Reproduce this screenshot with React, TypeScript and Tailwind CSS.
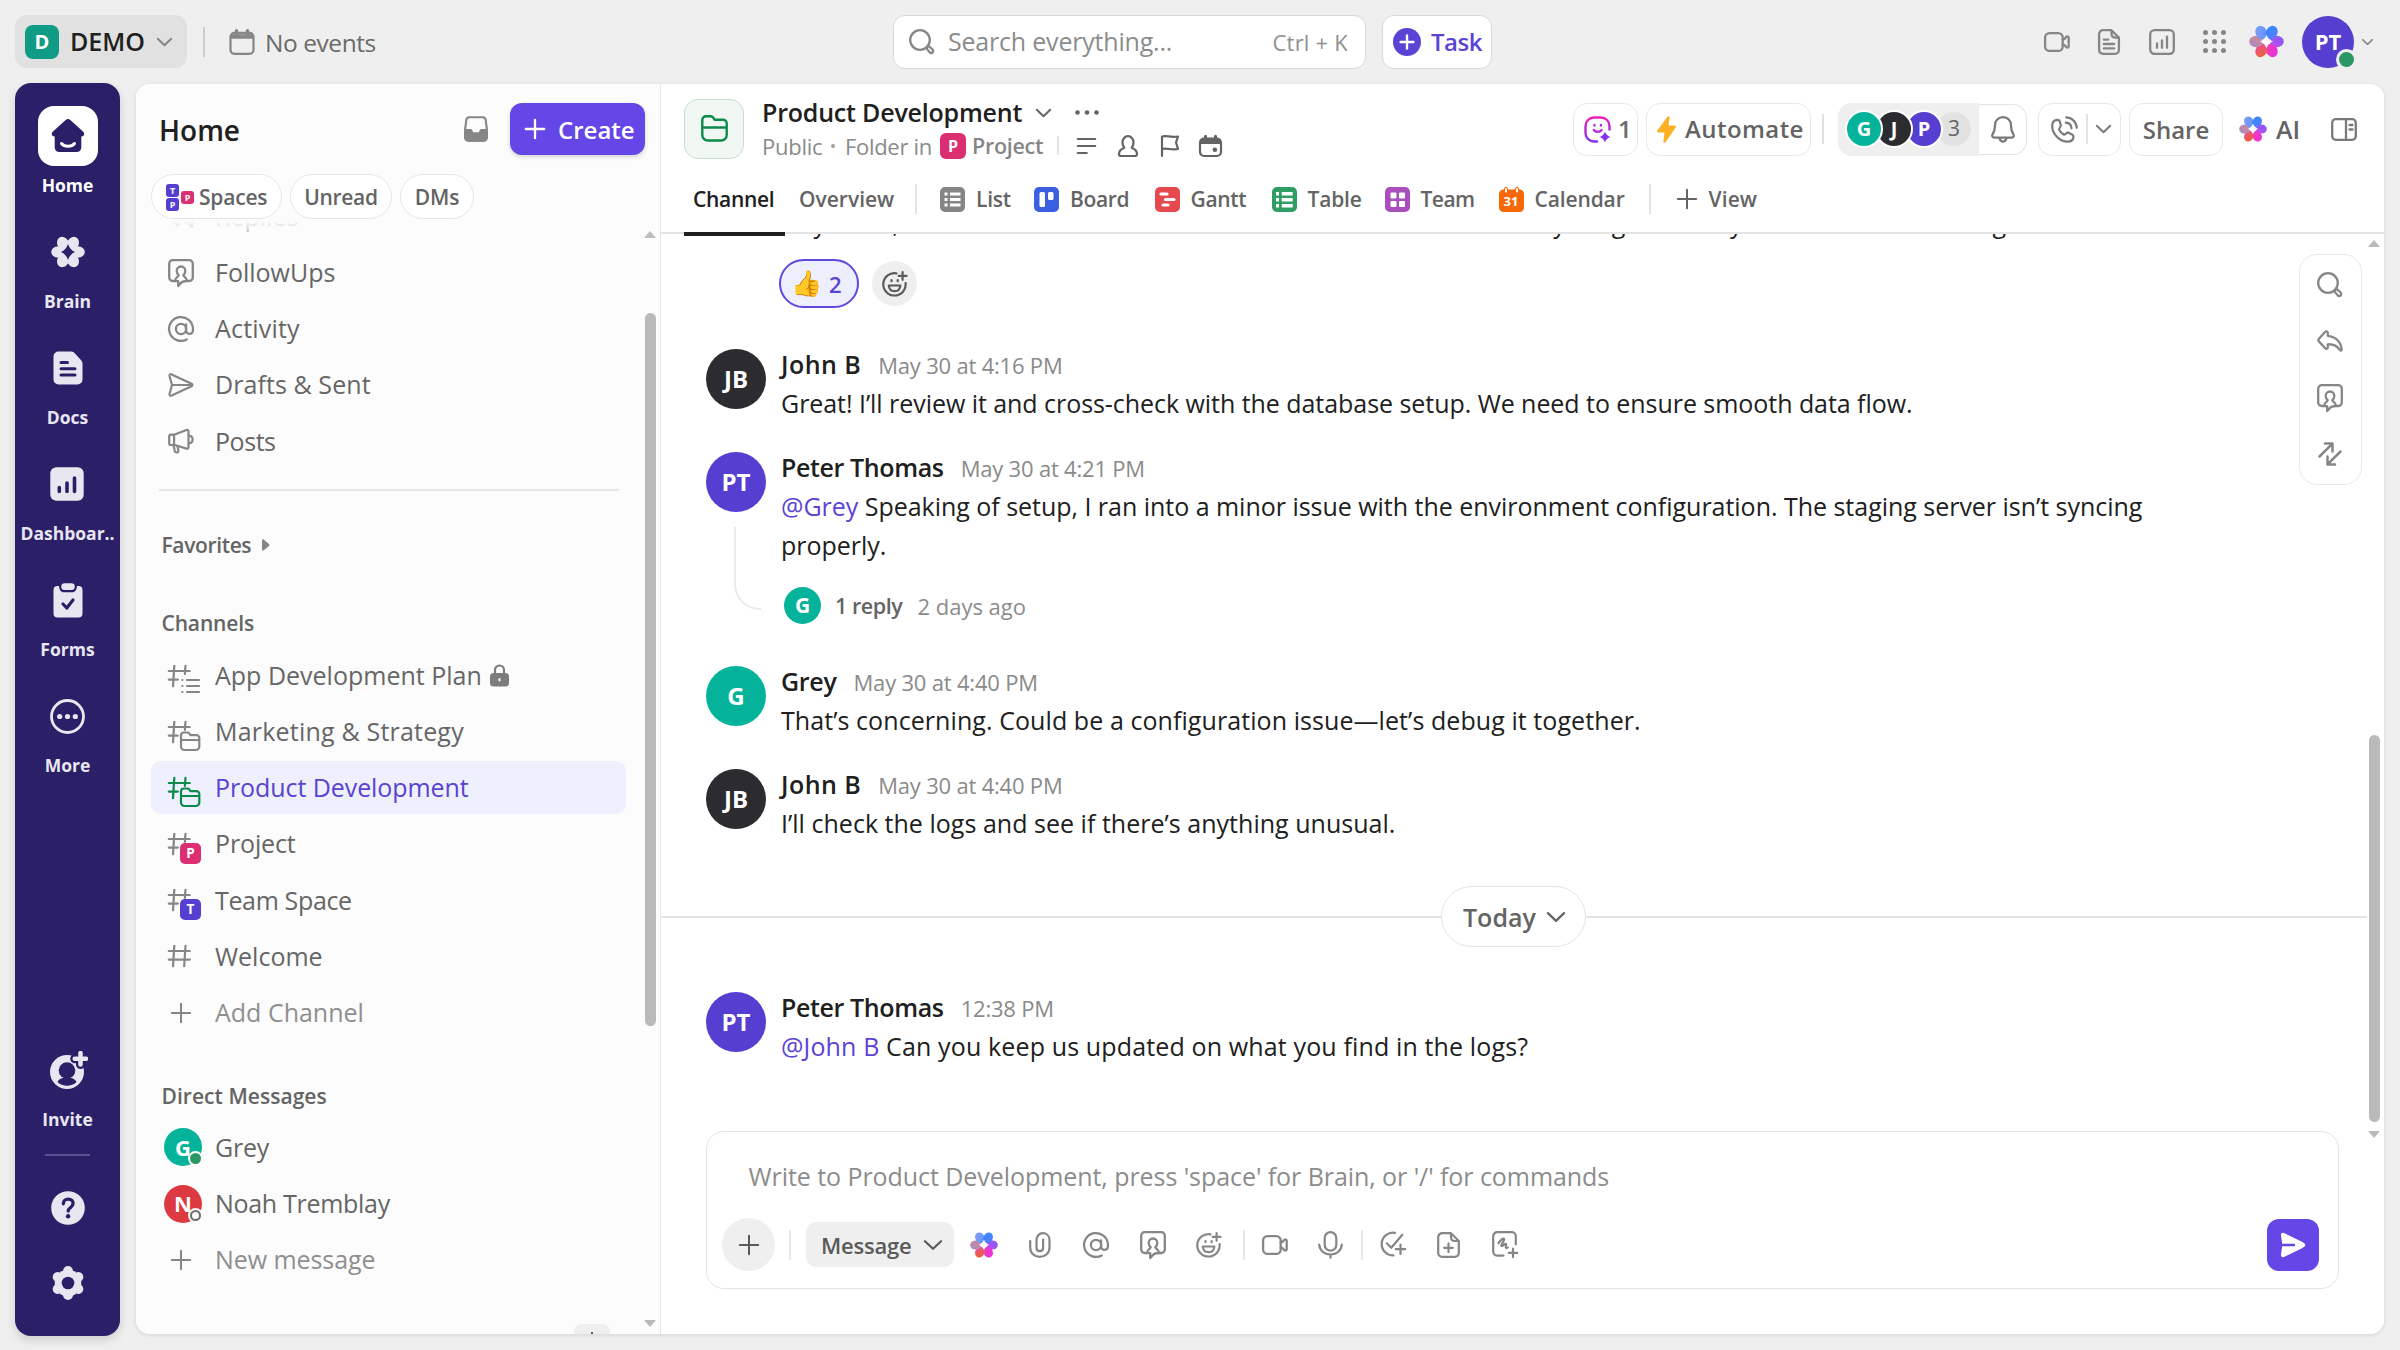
import type { ReactNode } from "react";

/* ---------- icon helpers ---------- */

type IconProps = { w?: number; h?: number; vb?: string; sw?: number; className?: string; children?: ReactNode };

function Ico({ w = 26, h = 26, vb, sw = 2.1, className = "", children }: IconProps) {
  return (
    <svg
      width={w}
      height={h}
      viewBox={vb ?? `0 0 ${w} ${h}`}
      fill="none"
      stroke="currentColor"
      strokeWidth={sw}
      strokeLinecap="round"
      strokeLinejoin="round"
      className={`shrink-0 overflow-visible ${className}`}
    >
      {children}
    </svg>
  );
}

const Chevron = ({ w = 15, h = 8, sw = 2, className = "" }: IconProps) => (
  <Ico w={w} h={h} vb="0 0 15 8" sw={sw} className={className}>
    <path d="M.8.8 7.5 7.2 14.2.8" />
  </Ico>
);

const Plus = ({ w = 20, sw = 2, className = "" }: IconProps) => (
  <Ico w={w} h={w} vb="0 0 20 20" sw={sw} className={className}>
    <path d="M10 .8v18.4M.8 10h18.4" />
  </Ico>
);

const SearchIcon = () => (
  <Ico sw={2.3}>
    <circle cx="11" cy="11" r="9.8" />
    <path d="m18 18.400 1.600-1.500 4 3.600a2 2 0 0 1-2.900 2.900l-3-3.800z" />
  </Ico>
);

const EventCalendar = () => (
  <Ico w={26} h={26} sw={2.2}>
    <rect x="1.5" y="3.8" width="23" height="21" rx="4" />
    <path d="M2 7.5h22" strokeWidth="4.5" strokeLinecap="butt" />
    <path d="M7.5 1.6v3.2M18.5 1.6v3.2" strokeWidth="3.4" />
  </Ico>
);

const VideoIcon = () => (
  <Ico w={26} h={20} sw={2.300}>
    <rect x="1.1" y="1.1" width="17.6" height="17.8" rx="4.5" />
    <path d="m18.7 7.6 2-.8 1.7-2c.8-.7 2.300-.4 2.300.9v8.600c0 1.300-1.500 1.600-2.300.9l-1.700-2-2-.8" />
  </Ico>
);

const DocIcon = () => (
  <Ico w={22} h={26} sw={2.300}>
    <path d="M13.5 1.200H5a3.900 3.900 0 0 0-3.900 3.900v15.800A3.900 3.900 0 0 0 5 24.800h12a3.900 3.900 0 0 0 3.900-3.900V8.600zM13.500 1.500v3.600a3.500 3.500 0 0 0 3.500 3.500h3.600" />
    <path d="M5.800 10.600h4.500M5.800 15h10.400M5.800 19.400h10.400" />
  </Ico>
);

const ChartIcon = () => (
  <Ico sw={2.300}>
    <rect x="1.200" y="1.200" width="23.600" height="23.600" rx="4.200" />
    <path d="M8 14.500v4.300M13 11.300v7.500M18 7.600v11.200" />
  </Ico>
);

const GridDots = () => (
  <Ico w={23} h={23} sw={0}>
    {[2.5, 11.5, 20.5].map((y) => [2.5, 11.5, 20.5].map((x) => <circle key={`${x}-${y}`} cx={x} cy={y} r="2.5" fill="currentColor" />))}
  </Ico>
);

const FollowUpIcon = () => (
  <Ico w={26} h={28} sw={2.300}>
    <path d="M6.500 22H4.600a3.400 3.400 0 0 1-3.400-3.400V4.600a3.400 3.400 0 0 1 3.400-3.400h16.800a3.400 3.400 0 0 1 3.400 3.400v14a3.400 3.400 0 0 1-3.400 3.400h-1.900" />
    <path d="M10.700 16.200c-1.300-1-2-2.600-2-4.400a4.300 4.300 0 0 1 8.600 0c0 1.800-.7 3.400-2 4.400.2 1.800 3.600 1.900 3.700 5.800-3.300 0-5.400.9-6.600 2.600l-2.200 2.400v-4.800H7c.1-4 3.500-4.200 3.700-6z" />
  </Ico>
);

const AtIcon = () => (
  <Ico vb="1 1 22 22" sw={1.900}>
    <circle cx="12" cy="12" r="4.300" />
    <path d="M16.300 8v5.200a2.900 2.900 0 0 0 5.800 0V12a10.100 10.100 0 1 0-5.200 8.800" />
  </Ico>
);

const SentIcon = () => (
  <Ico w={26} h={24} sw={2.200}>
    <path d="M1.500 3C1.200 1.400 2.400.9 3.600 1.400l20 9.400c1.100.6 1.100 1.800 0 2.400l-20 9.400c-1.200.5-2.400 0-2.100-1.600L4 12zM4 12h20" />
  </Ico>
);

const PostsIcon = () => (
  <Ico w={26} h={26} sw={2.200}>
    <path d="M6 6.800 18.500 2c1.200-.4 2 .2 2 1.300v16c0 1.100-.8 1.700-2 1.300L6 16.800" />
    <rect x="1.200" y="6.600" width="4.900" height="10.400" rx="1.800" />
    <path d="M20.800 7.700c2 .2 3.800 1.700 3.800 3.900s-1.800 3.700-3.800 3.900M5.500 17.300l1.300 5.800c.6 1.900 4 1.700 3.600-.4l-.9-4.600" />
  </Ico>
);

const ReplyIcon = () => (
  <Ico w={26} h={22} sw={2.300}>
    <path d="M10.800 5.800V3c0-1.500-1.500-2.200-2.600-1.200L1.800 8.900c-.7.800-.7 1.600 0 2.400l6.400 7c1.100 1.100 2.600.4 2.600-1.100v-2.900c5.700-.4 9.200 1.500 12.300 5.700.6.8 1.700.5 1.600-.6-.7-7.400-6.200-13-13.900-13.600z" />
  </Ico>
);

const SwapIcon = () => (
  <Ico w={24} h={24} sw={2.500}>
    <path d="M1.500 14.500 14.200 1.800M7 1.500h7.500v8M22.500 9.500 9.800 22.200M9.500 14.500v8H17" />
  </Ico>
);

const EmojiPlus = () => (
  <Ico sw={2.200}>
    <path d="M14.500 2.300A11.200 11.200 0 1 0 23.600 12" />
    <path d="M20.600 1v7.800M16.700 4.900h7.800" />
    <path d="M6.800 14.500h11.600c-.3 3.500-2.600 5.700-5.800 5.700s-5.500-2.200-5.800-5.700zM9.500 9v1.200M15.700 9v1.200" />
  </Ico>
);

const ClipIcon = () => (
  <Ico w={22} h={26} sw={2.200}>
    <path d="M1.200 9v6.500C1.200 21 5.300 24.900 10.800 24.900s9.700-3.900 9.700-9.400V8.200c0-4-2.700-7-6.600-7s-6.400 3-6.400 7v7.600c0 2 1.300 3.400 3.300 3.400s3.300-1.400 3.300-3.400V7.500" />
  </Ico>
);

const MicIcon = () => (
  <Ico w={25} h={28} sw={2.200}>
    <rect x="6.700" y="1.200" width="11.600" height="18.500" rx="5.800" />
    <path d="M1.200 13.500c.4 6 5 10 11.300 10s10.900-4 11.300-10M12.500 23.500v3.200" />
  </Ico>
);

const TaskPlus = () => (
  <Ico w={27} h={27} sw={2.200}>
    <path d="M16 1.900A11.300 11.300 0 1 0 14.500 24.300M7.800 12.300l4.500 4.500L23.300 3.800" />
    <path d="M21.500 13.500v9.400M16.800 18.200h9.400" />
  </Ico>
);

const DocPlus = () => (
  <Ico w={23} h={26} sw={2.200}>
    <path d="M14 1.200H5.200a4 4 0 0 0-4 4v15.600a4 4 0 0 0 4 4h12.600a4 4 0 0 0 4-4V9zM14 1.500v4A3.500 3.500 0 0 0 17.500 9h4M11.500 11.500v8.600M7.200 15.800h8.600" />
  </Ico>
);

const BoardPlus = () => (
  <Ico w={26} h={27} sw={2.200}>
    <path d="M11.500 24.600H5.200a4 4 0 0 1-4-4V5.200a4 4 0 0 1 4-4h14.600a4 4 0 0 1 4 4v8.300" />
    <path d="M6.500 12.300c1.500-3 4.800-5.600 5.600-4.400.9 1.500-3.600 5.800-2.700 7 .9 1 3.400-2.800 4.600-1.900.9.800-.9 2.700 0 3.700.5.500 1.200.3 1.800-.2M21 17.500v8.600M16.700 21.800h8.600" />
  </Ico>
);

const BellIcon = () => (
  <Ico w={24} h={27} sw={2.300}>
    <path d="M12 1.200c-4.800 0-8 3.600-8 8.200 0 5-1 6.600-2.300 8.600-1.200 1.900-.3 3.700 1.800 3.700h17c2.100 0 3-1.800 1.800-3.700C21 16 20 14.400 20 9.400c0-4.600-3.200-8.200-8-8.200zM8.500 22c.5 2.200 1.800 3.600 3.500 3.600s3-1.400 3.500-3.600" />
  </Ico>
);

const PhoneIcon = () => (
  <Ico w={27} h={27} sw={2.200}>
    <path d="M8.300 4.300 5.800 3.800C3 4.300 1.200 6.700 1.200 9.800c0 8.200 7.300 15.900 15.500 15.900 3 0 5.300-1.600 5.800-4.400.2-1.400-.4-2.300-1.400-2.800l-3-1.500c-1.300-.6-2.300-.2-3.200.8-.7.800-1.600 1-2.600.4-1.700-1-3-2.300-3.900-3.900-.5-1-.3-1.900.4-2.600 1-.9 1.400-1.900.9-3.200l-1.400-4.200z" />
    <path d="M15.200 1.300C21 1.500 25.500 6 25.700 11.800M14.800 6.700c3.300.2 5.500 2.400 5.700 5.600" />
  </Ico>
);

const PanelIcon = () => (
  <Ico w={26} h={23} sw={2.300}>
    <rect x="1.200" y="1.200" width="23.600" height="20.600" rx="3.500" />
    <path d="M15 1.500v20M18.500 7h3M18.500 11.500h3" />
  </Ico>
);

const FolderIcon = ({ w = 27, h = 27, sw = 2.4 }: IconProps) => (
  <Ico w={w} h={h} vb="0 0 27 27" sw={sw}>
    <path d="M1.300 12.500V5a3.700 3.700 0 0 1 3.700-3.700h4.700c1 0 1.800.4 2.400 1.200l1.600 2.300H22a3.700 3.700 0 0 1 3.700 3.700v4M1.300 12.500h24.400M1.300 12.500V20a5.500 5.500 0 0 0 5.500 5.500h13.400a5.500 5.500 0 0 0 5.500-5.500v-7.500" />
  </Ico>
);

function BrainFlower({ size = 34 }: { size?: number }) {
  const petals = [
    { a: 0, from: "#c24bf0", to: "#7d5cf8" },
    { a: 60, from: "#ef3fae", to: "#e92de6" },
    { a: 120, from: "#f0489a", to: "#e8672c" },
    { a: 180, from: "#d58a8a", to: "#a58ac8" },
    { a: 240, from: "#5f8dff", to: "#7fa4f5" },
    { a: 300, from: "#5a7bff", to: "#2f8bff" },
  ];
  return (
    <svg width={size} height={size} viewBox="-17 -17 34 34" className="shrink-0">
      <defs>
        {petals.map((p) => (
          <linearGradient key={p.a} id={`petal-${p.a}`} x1="0" x2="1" y1="1" y2="0">
            <stop offset="0" stopColor={p.from} />
            <stop offset="1" stopColor={p.to} />
          </linearGradient>
        ))}
      </defs>
      {petals.map((p) => (
        <ellipse key={p.a} cx="10" cy="0" rx="6.800" ry="5.500" transform={`rotate(${p.a})`} fill={`url(#petal-${p.a})`} />
      ))}
      <path d="M0-6.500Q1.700-1.700 6.300 0 1.700 1.700 0 6.500-1.700 1.700-6.300 0-1.700-1.700 0-6.500Z" fill="#fff" fillOpacity=".92" />
    </svg>
  );
}

/* ---------- top bar ---------- */

function TopBar() {
  return (
    <header className="flex h-[83px] shrink-0 items-center pl-[15px] text-[#868686]">
      <div className="flex w-[878px] items-center">
        <div className="flex h-[53px] w-[172px] items-center rounded-[12px] bg-[#e1e1e1] pl-[10px]">
          <span className="flex size-[34px] items-center justify-center rounded-[8px] bg-[#0f9b86] text-[20px] font-bold text-white">D</span>
          <span className="ml-[11px] w-[87px] pt-px text-[25px] font-semibold text-[#202020]">DEMO</span>
          <Chevron />
        </div>
        <div className="ml-[16px] h-[30px] w-[2px] bg-[#cbcbcb]" />
        <div className="ml-[24px] flex items-center gap-[10px]">
          <EventCalendar />
          <span className="pt-[3px] text-[24.500px] tracking-[-0.018em] text-[#6b6b6b]">No events</span>
        </div>
      </div>
      <div className="flex h-[54px] w-[473px] items-center rounded-[12px] border border-[#d9d9d9] bg-white pl-[15px] pr-[17px]">
        <SearchIcon />
        <span className="ml-[13px] pt-px text-[25px] tracking-[-0.008em] text-[#8c8c8c]">Search everything...</span>
        <span className="ml-auto pt-px text-[22px] tracking-[0.01em] text-[#8f8f8f]">Ctrl + K</span>
      </div>
      <div className="ml-[16px] flex h-[54px] w-[110px] items-center rounded-[12px] border border-[#d9d9d9] bg-white pl-[10px] text-[#5b43d6]">
        <span className="flex size-[28px] items-center justify-center rounded-full bg-[#5b43d6] text-white">
          <Plus w={14} sw={3.400} />
        </span>
        <span className="ml-[10px] pt-px text-[24px] font-semibold tracking-[-0.021em]">Task</span>
      </div>
      <div className="ml-auto flex items-center pr-[27px]">
        <VideoIcon />
        <span className="ml-[28px] flex"><DocIcon /></span>
        <span className="ml-[29px] flex"><ChartIcon /></span>
        <span className="ml-[28px] flex"><GridDots /></span>
        <span className="ml-[23px] flex"><BrainFlower size={35} /></span>
        <span className="relative ml-[18px] flex size-[52px] items-center justify-center rounded-full bg-[#563ed0] text-[22px] font-bold text-white">
          PT
          <span className="absolute -bottom-[2px] -right-[3px] size-[21px] rounded-full border-[3px] border-[#efefef] bg-[#2a9764]" />
        </span>
        <Chevron w={11} h={6} className="ml-[8px]" />
      </div>
    </header>
  );
}

/* ---------- left rail ---------- */

const railHome = (
  <svg width="34" height="34" viewBox="0 0 34 34" fill="#2b2068">
    <path d="M14.400 1.200a4 4 0 0 1 5.200 0L32 12.500c2.300 2.200 1.200 5.100-1.700 5.100v11a4.500 4.500 0 0 1-4.500 4.500H8.200a4.500 4.500 0 0 1-4.500-4.500v-11C.8 17.600-.3 14.700 2 12.500z" />
    <path d="M10.500 24.500c3 3.700 10 3.700 13 0" fill="none" stroke="#fff" strokeWidth="3" strokeLinecap="round" />
  </svg>
);
const railBrain = (
  <svg width="34" height="34" viewBox="-17 -17 34 34" fill="#e8e6f0">
    {[0, 60, 120, 180, 240, 300].map((a) => (
      <ellipse key={a} cx="10" cy="0" rx="6.800" ry="5.700" transform={`rotate(${a})`} />
    ))}
    <path d="M0-8Q2-2 7 0 2 2 0 8-2 2-7 0-2-2 0-8Z" fill="#2b2068" />
  </svg>
);
const railDocs = (
  <svg width="30" height="34" viewBox="0 0 30 34" fill="#e8e6f0">
    <path d="M5.500.5h12c2 0 3.200.6 4.500 2l5.700 6.300c1.200 1.300 1.800 2.400 1.800 4.200v15.500a5 5 0 0 1-5 5h-19a5 5 0 0 1-5-5v-23a5 5 0 0 1 5-5z" />
    <path d="M8 11.500h6.500M8 17.800h14M8 24h14" stroke="#2b2068" strokeWidth="3" strokeLinecap="round" />
  </svg>
);
const railDash = (
  <svg width="34" height="34" viewBox="0 0 34 34" fill="#e8e6f0">
    <rect x=".3" y=".3" width="33.400" height="33.400" rx="6" />
    <path d="M9.300 20.500v4M17 16v8.500M24.500 11v13.500" stroke="#2b2068" strokeWidth="3.600" strokeLinecap="round" />
  </svg>
);
const railForms = (
  <svg width="30" height="35" viewBox="0 0 30 35" fill="#e8e6f0">
    <path d="M4.500 3H6c.3 4 2 6.300 5 6.300h8c3 0 4.700-2.300 5-6.300h1.500a4 4 0 0 1 4 4v23.500a4 4 0 0 1-4 4h-21a4 4 0 0 1-4-4V7a4 4 0 0 1 4-4z" />
    <rect x="8.300" y=".3" width="13.400" height="6.700" rx="3.300" />
    <path d="m10 21 3.800 4 6.200-8" fill="none" stroke="#2b2068" strokeWidth="3.200" strokeLinecap="round" strokeLinejoin="round" />
  </svg>
);
const railMore = (
  <svg width="35" height="35" viewBox="0 0 35 35" fill="#e8e6f0">
    <circle cx="17.500" cy="17.500" r="16" fill="none" stroke="#e8e6f0" strokeWidth="2.800" />
    {[9.700, 17.500, 25.300].map((x) => <circle key={x} cx={x} cy="17.500" r="2.600" />)}
  </svg>
);
const railInvite = (
  <svg width="38" height="38" viewBox="0 0 38 38" fill="#e8e6f0" className="ml-[3px]">
    <circle cx="17" cy="21" r="17" />
    <circle cx="17" cy="19.500" r="8.300" fill="#2b2068" />
    <path d="M7.500 31c1.200-3 4-3.500 6.500-4.500h6c2.500 1 5.300 1.500 6.500 4.500-5 5-14 5-19 0z" fill="#2b2068" />
    <path d="M30.500 2v11.500M24.700 7.800h11.500" stroke="#2b2068" strokeWidth="9" strokeLinecap="round" />
    <path d="M30.500 2v11.500M24.700 7.800h11.500" stroke="#e8e6f0" strokeWidth="4.500" strokeLinecap="round" />
  </svg>
);

function RailItem({ icon, label, active }: { icon: ReactNode; label: string; active?: boolean }) {
  return (
    <div className="flex h-[116.200px] flex-col items-center">
      <div className={`flex size-[60px] items-center justify-center rounded-[16px] ${active ? "bg-white" : ""}`}>{icon}</div>
      <span className={`mt-[6px] whitespace-nowrap text-[17.500px] font-bold leading-[26px] ${active ? "text-white" : "text-[#e8e6f0]"}`}>{label}</span>
    </div>
  );
}

function Rail() {
  return (
    <nav className="ml-[15px] flex h-[1253px] w-[105px] shrink-0 flex-col items-center rounded-[16px] bg-[#2b2068] pt-[22.500px] shadow-[0_4px_10px_rgba(0,0,0,0.14)]">
      <RailItem icon={railHome} label="Home" active />
      <RailItem icon={railBrain} label="Brain" />
      <RailItem icon={railDocs} label="Docs" />
      <RailItem icon={railDash} label="Dashboar.." />
      <RailItem icon={railForms} label="Forms" />
      <RailItem icon={railMore} label="More" />
      <div className="mt-auto flex flex-col items-center">
        <RailItem icon={railInvite} label="Invite" />
        <div className="-mt-[2px] h-[2px] w-[45px] bg-[#5b5091]" />
        <svg width="34" height="34" viewBox="0 0 34 34" className="mt-[35px]">
          <circle cx="17" cy="17" r="16.800" fill="#e8e6f0" />
          <path d="M12.300 12.800c0-2.800 2-4.700 4.900-4.700s4.900 1.800 4.900 4.500c0 3.800-4.900 3.900-4.900 7.400" fill="none" stroke="#2b2068" strokeWidth="3.300" strokeLinecap="round" />
          <circle cx="17.100" cy="25.200" r="2.200" fill="#2b2068" />
        </svg>
        <svg width="34" height="34" viewBox="-17 -17 34 34" className="mb-[36px] mt-[41px]" fill="#e8e6f0">
          <circle r="13.300" />
          {[30, 90, 150, 210, 270, 330].map((a) => <circle key={a} cx="12" cy="0" r="4.900" transform={`rotate(${a})`} />)}
          <circle r="6.300" fill="#2b2068" />
        </svg>
      </div>
    </nav>
  );
}

/* ---------- sidebar ---------- */

type Sub = "none" | "list" | "folder" | "badge";

function HashIcon({ sub = "none", badge, badgeColor }: { sub?: Sub; badge?: string; badgeColor?: string }) {
  return (
    <span className="relative block h-[22px] w-[32px]">
      <Ico w={32} h={30} sw={2.200} className="absolute left-0 top-0">
        {sub === "none" ? (
          <path d="M6.300.8 5 21.200M17.500.8l-1.300 20.400M.8 6h21M.8 14.600h21" />
        ) : (
          <path d="M6.300.8 5 21.200M17.500.8l-.6 8.200M.8 6h21M.8 14.600h9" />
        )}
        {sub === "list" && <path d="M14.300 15h.1M14.300 21h.1M14.300 27h.1M19 15h12M19 21h12M19 27h12" />}
        {sub === "folder" && (
          <path d="M13 19v-4.500a3 3 0 0 1 3-3h3.500c.8 0 1.300.3 1.700.9l1.300 1.800h6a2.800 2.800 0 0 1 2.800 2.800v2M13 19h18.300M13 19v6.500a3.500 3.500 0 0 0 3.500 3.500h11.300a3.500 3.500 0 0 0 3.500-3.500V19" />
        )}
      </Ico>
      {sub === "badge" && (
        <span className={`absolute left-[12px] top-[10px] flex size-[21px] items-center justify-center rounded-[5px] text-[13.500px] font-bold leading-none text-white ${badgeColor}`}>
          {badge}
        </span>
      )}
    </span>
  );
}

function Row({ icon, children, active, muted }: { icon: ReactNode; children: ReactNode; active?: boolean; muted?: boolean }) {
  const tone = active ? "text-[#5a43d0]" : muted ? "text-[#8f8f8f]" : "text-[#666666]";
  return (
    <div className="flex h-[56.200px] items-center">
      <div className={`flex h-[53px] w-[475px] items-center rounded-[10px] pl-[17px] ${active ? "bg-[#eef0fe]" : ""}`}>
        <span className={`flex w-[47px] items-center ${active ? "text-[#0b8a4a]" : "text-[#868686]"}`}>{icon}</span>
        <span className={`flex items-center whitespace-nowrap text-[25px] ${tone}`}>{children}</span>
      </div>
    </div>
  );
}

function Pill({ children, className = "" }: { children: ReactNode; className?: string }) {
  return (
    <div className={`flex h-[45px] items-center rounded-full border border-[#e6e6e6] bg-white pt-[2px] text-[21px] font-semibold tracking-[-0.01em] text-[#646464] ${className}`}>
      {children}
    </div>
  );
}

function MiniSpace({ t, c }: { t: string; c: string }) {
  return <span className={`flex size-[13px] items-center justify-center overflow-hidden rounded-[3px] text-[9px] font-bold leading-none text-white ${c}`}>{t}</span>;
}

function Sidebar() {
  return (
    <aside className="relative flex w-[524px] shrink-0 flex-col bg-[#fcfcfc] pl-[15px]">
      <div className="mt-[19px] flex h-[52px] items-center">
        <h1 className="ml-[8px] pt-[2px] text-[28px] font-semibold text-[#202020]">Home</h1>
        <svg width="24" height="26" viewBox="0 0 24 26" className="ml-auto" fill="none" stroke="#868686" strokeWidth="2.100" strokeLinejoin="round">
          <path d="M5.500 1.200h13c1.800 0 2.900.9 3.200 2.600l1.200 9.700v7.800a3.500 3.500 0 0 1-3.500 3.500H4.600a3.500 3.500 0 0 1-3.500-3.500v-7.800l1.200-9.700c.3-1.700 1.400-2.600 3.200-2.600z" />
          <path d="M1.100 14H7l1.500 3.400h7L17 14h5.900v7.300a3.500 3.500 0 0 1-3.500 3.500H4.600a3.500 3.500 0 0 1-3.500-3.500z" fill="#868686" />
        </svg>
        <button className="ml-[22px] mr-[15px] flex h-[52px] w-[135px] items-center rounded-[12px] bg-[#6447e6] pl-[15px] text-white shadow-[0_2px_4px_rgba(0,0,0,0.16)]">
          <Plus sw={2.300} />
          <span className="ml-[13px] pt-[2px] text-[24px] font-semibold">Create</span>
        </button>
      </div>
      <div className="mt-[19px] flex gap-[8px]">
        <Pill className="w-[131px] pl-[14px]">
          <span className="mr-[5px] flex items-center gap-[2px]">
            <span className="flex flex-col gap-[1.500px]">
              <MiniSpace t="T" c="bg-[#563ed0]" />
              <MiniSpace t="P" c="bg-[#563ed0]" />
            </span>
            <MiniSpace t="P" c="bg-[#dc2f72]" />
          </span>
          Spaces
        </Pill>
        <Pill className="w-[102px] justify-center"><span className="tracking-[-0.015em]">Unread</span></Pill>
        <Pill className="w-[74px] justify-center">DMs</Pill>
      </div>

      <div className="relative mt-[2px] h-[1113px] overflow-hidden">
        <div className="-mt-[32.500px]">
          <Row icon={<ReplyIcon />}>Replies</Row>
          <Row icon={<FollowUpIcon />}>FollowUps</Row>
          <Row icon={<AtIcon />}><span className="tracking-[0.008em]">Activity</span></Row>
          <Row icon={<SentIcon />}><span className="tracking-[0.003em]">Drafts &amp; Sent</span></Row>
          <Row icon={<PostsIcon />}><span className="tracking-[-0.018em]">Posts</span></Row>
        </div>
        <div className="ml-[8px] mt-[20px] h-[2px] w-[460px] bg-[#e6e6e6]" />
        <div className="ml-[10.500px] mt-[39px] flex h-[30px] items-center text-[21px] font-semibold tracking-[-0.017em] text-[#646464]">
          Favorites
          <svg width="8" height="12" viewBox="0 0 8 12" className="ml-[11px]" fill="#868686"><path d="M0 1.500C0 .3 1 0 1.800.8L7 5c.6.600.6 1.400 0 2l-5.200 4.200C1 12 0 11.700 0 10.500z" /></svg>
        </div>
        <div className="ml-[10.500px] mt-[48px] h-[30px] text-[21px] font-semibold leading-[30px] tracking-[-0.007em] text-[#646464]">Channels</div>
        <div className="mt-[9px]">
          <Row icon={<HashIcon sub="list" />}>
            App Development Plan
            <svg width="19" height="23" viewBox="0 0 19 23" className="ml-[8px]" fill="#7c7c7c">
              <path d="M5 11V6a4.500 4.500 0 0 1 9 0v5" fill="none" stroke="#7c7c7c" strokeWidth="2.200" />
              <rect y="9" width="19" height="13.500" rx="3.500" />
              <rect x="8.500" y="14" width="2" height="3.500" rx="1" fill="#fcfcfc" />
            </svg>
          </Row>
          <Row icon={<HashIcon sub="folder" />}><span className="tracking-[0.008em]">Marketing &amp; Strategy</span></Row>
          <Row active icon={<HashIcon sub="folder" />}><span className="tracking-[-0.003em]">Product Development</span></Row>
          <Row icon={<HashIcon sub="badge" badge="P" badgeColor="bg-[#dc2f72]" />}><span className="tracking-[-0.005em]">Project</span></Row>
          <Row icon={<HashIcon sub="badge" badge="T" badgeColor="bg-[#563ed0]" />}><span className="tracking-[-0.014em]">Team Space</span></Row>
          <Row icon={<HashIcon />}>Welcome</Row>
          <Row muted icon={<Plus className="ml-[3px]" />}>Add Channel</Row>
        </div>
        <div className="ml-[10.500px] mt-[40px] h-[30px] text-[21px] font-semibold leading-[30px] tracking-[0.002em] text-[#646464]">Direct Messages</div>
        <div className="mt-[8.500px]">
          <Row
            icon={
              <span className="relative -ml-[4px] flex size-[38px] items-center justify-center rounded-full bg-[#05b39a] text-[22px] font-bold text-white">
                G
                <span className="absolute -right-[1px] bottom-0 size-[15px] rounded-full border-2 border-[#fcfcfc] bg-[#2a9764]" />
              </span>
            }
          >
            <span className="tracking-[-0.01em]">Grey</span>
          </Row>
          <Row
            icon={
              <span className="relative -ml-[4px] flex size-[38px] items-center justify-center rounded-full bg-[#dc3a40] text-[22px] font-bold text-white">
                N
                <span className="absolute -right-[1px] bottom-0 flex size-[15px] items-center justify-center rounded-full bg-[#fcfcfc]">
                  <span className="size-[11px] rounded-full border-2 border-[#6b6b6b]" />
                </span>
              </span>
            }
          >
            <span className="tracking-[-0.012em]">Noah Tremblay</span>
          </Row>
          <Row muted icon={<Plus className="ml-[3px]" />}><span className="tracking-[-0.003em]">New message</span></Row>
        </div>
        <div className="absolute inset-x-0 top-0 h-[18px] bg-gradient-to-b from-[#fcfcfc] via-[#fcfcfc]/70 to-[#fcfcfc]/10" />
        <div className="absolute bottom-0 left-[423px] flex h-[10px] w-[36px] justify-center overflow-hidden rounded-t-[8px] bg-[#efefef]">
          <span className="mt-[8px] h-[4px] w-[2px] bg-[#5a5a5a]" />
        </div>
      </div>

      <span className="absolute left-[508px] top-[147px] border-x-[6.500px] border-b-[7px] border-x-transparent border-b-[#bdbdbd]" />
      <span className="absolute left-[509px] top-[229px] h-[713px] w-[11px] rounded-full bg-[#bababa]" />
      <span className="absolute left-[508px] top-[1236px] border-x-[6.500px] border-t-[7px] border-x-transparent border-t-[#bababa]" />
    </aside>
  );
}

/* ---------- channel header ---------- */

const ViewBox = ({ fill, children }: { fill: string; children: ReactNode }) => (
  <svg width="25" height="25" viewBox="0 0 25 25" className="shrink-0">
    <rect width="25" height="25" rx="5" fill={fill} />
    {children}
  </svg>
);

const views: { label: string; width: string; tracking: string; icon: ReactNode }[] = [
  {
    label: "List",
    width: "w-[94px]",
    tracking: "tracking-[-0.01em]",
    icon: (
      <ViewBox fill="#868686">
        <path d="M4.500 5.500h3v3h-3zM10 5.500h10.500v3H10zM4.500 11h3v3h-3zM10 11h10.500v3H10zM4.500 16.500h3v3h-3zM10 16.500h10.500v3H10z" fill="#fff" />
      </ViewBox>
    ),
  },
  {
    label: "Board",
    width: "w-[120.500px]",
    tracking: "tracking-[-0.018em]",
    icon: (
      <ViewBox fill="#3b5fe0">
        <rect x="5.500" y="5" width="5.500" height="15" rx="1.500" fill="#fff" />
        <rect x="14" y="5" width="5.500" height="8" rx="1.500" fill="#fff" />
      </ViewBox>
    ),
  },
  {
    label: "Gantt",
    width: "w-[117px]",
    tracking: "tracking-[-0.015em]",
    icon: (
      <ViewBox fill="#e5484d">
        <path d="M6 7h6M10.500 12.500h8.500M8 18h5" stroke="#fff" strokeWidth="3.200" strokeLinecap="round" />
      </ViewBox>
    ),
  },
  {
    label: "Table",
    width: "w-[113px]",
    tracking: "tracking-[-0.010em]",
    icon: (
      <ViewBox fill="#2f9e63">
        <path d="M4 5h3v3.500H4zM9.700 5h11v3.500h-11zM4 11h3v3.500H4zM9.700 11h11v3.500h-11zM4 17h3v3.500H4zM9.700 17h11v3.500h-11z" fill="#fff" />
      </ViewBox>
    ),
  },
  {
    label: "Team",
    width: "w-[114px]",
    tracking: "tracking-[-0.025em]",
    icon: (
      <ViewBox fill="#a94fbd">
        <rect x="5.500" y="5.500" width="6" height="6" rx="1" fill="#fff" />
        <rect x="14" y="5.500" width="6" height="6" rx="1" fill="#fff" />
        <rect x="5.500" y="14" width="6" height="6" rx="1" fill="#fff" />
        <rect x="14" y="14" width="6" height="6" rx="1" fill="#fff" />
      </ViewBox>
    ),
  },
  {
    label: "Calendar",
    width: "w-[150px]",
    tracking: "tracking-[-0.006em]",
    icon: (
      <span className="relative flex h-[25px] w-[25px] shrink-0 items-center justify-center">
        <svg width="25" height="25" viewBox="0 0 25 25" className="absolute inset-0">
          <path d="M4.500 2.500 6 0h2l1.500 2.500h6L17 0h2l1.500 2.500A4.500 4.500 0 0 1 25 7v13.500a4.500 4.500 0 0 1-4.500 4.500h-16A4.500 4.500 0 0 1 0 20.500V7a4.500 4.500 0 0 1 4.500-4.500z" fill="#f76808" />
          <path d="M7 2v2.500M18 2v2.500" stroke="#fff" strokeWidth="2" strokeLinecap="round" />
        </svg>
        <span className="relative mt-[4px] text-[13px] font-bold leading-none text-white">31</span>
      </span>
    ),
  },
];

const HeaderBox = ({ className, children }: { className: string; children: ReactNode }) => (
  <div className={`flex h-[53px] items-center rounded-[14px] border border-[#e8e8e8] ${className}`}>{children}</div>
);

function StackAvatar({ t, className }: { t: string; className: string }) {
  return (
    <span className={`relative -ml-[8px] flex size-[38px] shrink-0 items-center justify-center rounded-full border-2 border-white text-[20px] font-bold text-white ${className}`}>
      {t}
    </span>
  );
}

function ChannelHeader() {
  return (
    <div className="flex h-[150px] shrink-0 flex-col border-b-2 border-[#e4e4e4]">
      <div className="flex h-[90px] shrink-0 items-center pl-[23px] text-[#6b6b6b]">
        <div className="flex size-[60px] shrink-0 items-center justify-center rounded-[14px] border border-[#c5e0d0] bg-[#f1f8f4] pb-[2px] text-[#0b8a4a]">
          <FolderIcon />
        </div>
        <div className="ml-[18px] w-[811px]">
          <div className="flex h-[33px] items-center">
            <span className="w-[274px] pt-px text-[25px] font-semibold tracking-[-0.008em] text-[#202020]">Product Development</span>
            <Chevron className="text-[#646464]" />
            <Ico w={24} h={5} sw={0} className="ml-[24px] text-[#646464]">
              <circle cx="2.500" cy="2.500" r="2.300" fill="currentColor" />
              <circle cx="12" cy="2.500" r="2.300" fill="currentColor" />
              <circle cx="21.500" cy="2.500" r="2.300" fill="currentColor" />
            </Ico>
          </div>
          <div className="flex h-[33px] items-center text-[22px] text-[#8a8a8a]">
            <span className="w-[69px] pt-px tracking-[-0.012em]">Public</span>
            <span className="size-[4px] rounded-full bg-[#a0a0a0]" />
            <span className="ml-[10px] pt-px tracking-[-0.014em]">Folder in</span>
            <span className="ml-[8px] flex size-[26px] items-center justify-center rounded-[6px] bg-[#dc2f72] text-[16px] font-bold leading-none text-white">P</span>
            <span className="ml-[6px] w-[85px] pt-px text-[21.500px] font-semibold tracking-[-0.013em] text-[#868686]">Project</span>
            <span className="h-[19px] w-[2px] bg-[#e4e4e4]" />
            <span className="flex items-center text-[#646464]">
              <Ico w={19} h={16} sw={2.200} className="ml-[18px]"><path d="M.8 1h17.400M.8 8h17.400M.8 15h9" /></Ico>
              <Ico w={20} h={22} sw={2.200} className="ml-[22px]">
                <path d="M6.300 12.800C5 11.500 4.500 9.800 4.500 7.500a5.500 6.300 0 0 1 11 0c0 2.300-.5 4-1.800 5.300 2.900 1.200 5.300 3 5.300 6.200 0 1.500-.7 2-2.200 2H3.200C1.700 21 1 20.500 1 19c0-3.200 2.400-5 5.300-6.200z" />
              </Ico>
              <Ico w={18} h={22} sw={2.200} className="ml-[23px]">
                <path d="M1 21V1.500c5-1.500 8 1.500 16 0l-2 6 2 6.500c-7 1.500-11-1.500-16 0" />
              </Ico>
              <Ico w={23} h={22} sw={2.200} className="ml-[20px]">
                <rect x="1" y="3.500" width="21" height="17.500" rx="4" />
                <path d="M1.500 6.500h20" strokeWidth="5" strokeLinecap="butt" />
                <path d="M6.500 1.200v3M16.500 1.200v3" strokeWidth="3" />
                <path d="M15.800 14.700h.1" strokeWidth="4.500" />
              </Ico>
            </span>
          </div>
        </div>

        <HeaderBox className="w-[65px] pl-[10px]">
          <svg width="27" height="27" viewBox="0 0 27 27" fill="none" strokeWidth="2.400" strokeLinecap="round">
            <defs>
              <linearGradient id="agent" x1="0" x2="0" y1="0" y2="1"><stop offset="0" stopColor="#ee1fbd" /><stop offset="1" stopColor="#8330f0" /></linearGradient>
            </defs>
            <path d="M13 25.500h-3A8.500 8.500 0 0 1 1.500 17v-7A8.500 8.500 0 0 1 10 1.500h7A8.500 8.500 0 0 1 25.500 10v3.500" stroke="url(#agent)" />
            <path d="M10.500 9v.7M17 9v.7M9.800 14c1.800 2.600 6 2.600 7.800 0" stroke="#b42be0" strokeWidth="2.300" />
            <path d="M21 15.500q1.300 4.200 5.500 5.500-4.200 1.300-5.500 5.500-1.300-4.200-5.500-5.500 4.200-1.300 5.500-5.500z" fill="#8330f0" />
          </svg>
          <span className="ml-[7px] text-[24px] font-semibold">1</span>
        </HeaderBox>
        <HeaderBox className="ml-[8px] w-[165px] pl-[10px]">
          <svg width="19" height="27" viewBox="0 0 19 27" fill="#fdb022"><path d="M10.500.8c.9-1.200 2.300-.7 2.100.8L11.500 9.500h6.200c1.300 0 1.700 1 1 2L8.500 26.200c-.9 1.200-2.300.7-2.100-.8l1.100-8.900H1.300c-1.300 0-1.700-1-1-2z" /></svg>
          <span className="ml-[9px] text-[24px] font-semibold tracking-[0.018em] text-[#646464]">Automate</span>
        </HeaderBox>
        <span className="ml-[11px] h-[30px] w-[2px] bg-[#e0e0e0]" />
        <div className="ml-[14px] flex h-[53px] w-[141px] items-center rounded-l-[14px] bg-[#efefef] pl-[15px]">
          <StackAvatar t="G" className="z-30 bg-[#05b39a]" />
          <StackAvatar t="J" className="z-20 bg-[#2b2b30]" />
          <StackAvatar t="P" className="z-10 bg-[#563ed0]" />
          <span className="-ml-[6px] flex size-[34px] items-center justify-center rounded-full bg-[#e2e2e2] text-[21px] text-[#646464]">3</span>
        </div>
        <div className="flex h-[51px] w-[48px] items-center justify-center rounded-r-[14px] border border-l-0 border-[#e4e4e4] text-[#7a7a7a]"><BellIcon /></div>
        <HeaderBox className="ml-[11px] w-[83px] pl-[12px] text-[#7a7a7a]">
          <PhoneIcon />
          <span className="ml-[8px] h-[30px] w-[2px] bg-[#e4e4e4]" />
          <Chevron className="ml-[8px]" />
        </HeaderBox>
        <HeaderBox className="ml-[8px] w-[94px] justify-center"><span className="pt-[2px] text-[24px] font-semibold text-[#646464]">Share</span></HeaderBox>
        <span className="ml-[16px] flex"><BrainFlower size={28} /></span>
        <span className="ml-[9px] w-[55px] pt-[2px] text-[25px] font-semibold text-[#646464]">AI</span>
        <span className="flex text-[#7a7a7a]"><PanelIcon /></span>
      </div>

      <div className="flex h-[58px] shrink-0 items-center pb-[8px] pl-[23px] text-[21px] font-semibold text-[#646464]">
        <div className="relative w-[101px] pl-[9px] pt-[2px] tracking-[-0.015em] text-[#202020]">
          Channel
          <span className="absolute -bottom-[20px] left-0 h-[4px] w-[101px] bg-[#202020]" />
        </div>
        <span className="ml-[14px] w-[116px] pt-[2px]">Overview</span>
        <span className="mr-[23px] h-[30px] w-[2px] bg-[#e4e4e4]" />
        {views.map((v) => (
          <div key={v.label} className={`flex items-center gap-[11px] ${v.width}`}>
            {v.icon}
            <span className={`pt-[2px] ${v.tracking}`}>{v.label}</span>
          </div>
        ))}
        <span className="h-[30px] w-[2px] bg-[#e4e4e4]" />
        <Plus className="ml-[26px]" />
        <span className="ml-[12px] pt-[2px] tracking-[0.005em]">View</span>
      </div>
    </div>
  );
}

/* ---------- messages ---------- */

type Message = {
  initials: string;
  color: string;
  name: string;
  nameTracking: string;
  time: string;
  mention?: string;
  lines: string[];
  tracking?: string;
};

function MessageBlock({ m, children }: { m: Message; children?: ReactNode }) {
  return (
    <div className="relative flex pl-[45px]">
      <span className={`mt-[4px] flex size-[60px] shrink-0 items-center justify-center rounded-full text-[24px] font-bold text-white ${m.color}`}>{m.initials}</span>
      <div className="ml-[15px]">
        <div className="flex h-[39px] items-center pt-px">
          <span className={`text-[25px] font-semibold text-[#202020] ${m.nameTracking}`}>{m.name}</span>
          <span className="ml-[17px] pt-px text-[22px] tracking-[-0.009em] text-[#8a8a8a]">{m.time}</span>
        </div>
        {m.lines.map((line, i) => (
          <p key={line} className={`h-[39px] whitespace-nowrap text-[25px] leading-[39px] text-[#202020] ${m.tracking ?? ""}`}>
            {i === 0 && m.mention && <span className="text-[#5b43d6]">{m.mention} </span>}
            {line}
          </p>
        ))}
        {children}
      </div>
    </div>
  );
}

const jbGreat: Message = {
  initials: "JB",
  color: "bg-[#2b2b30]",
  name: "John B",
  nameTracking: "tracking-[0.018em]",
  time: "May 30 at 4:16 PM",
  lines: ["Great! I’ll review it and cross-check with the database setup. We need to ensure smooth data flow."],
  tracking: "tracking-[-0.002em]",
};
const ptSetup: Message = {
  initials: "PT",
  color: "bg-[#563ed0]",
  name: "Peter Thomas",
  nameTracking: "tracking-[-0.015em]",
  time: "May 30 at 4:21 PM",
  mention: "@Grey",
  lines: ["Speaking of setup, I ran into a minor issue with the environment configuration. The staging server isn’t syncing", "properly."],
  tracking: "tracking-[-0.001em]",
};
const greyConcern: Message = {
  initials: "G",
  color: "bg-[#05b39a]",
  name: "Grey",
  nameTracking: "tracking-[-0.012em]",
  time: "May 30 at 4:40 PM",
  lines: ["That’s concerning. Could be a configuration issue—let’s debug it together."],
  tracking: "tracking-[0.003em]",
};
const jbLogs: Message = {
  initials: "JB",
  color: "bg-[#2b2b30]",
  name: "John B",
  nameTracking: "tracking-[0.018em]",
  time: "May 30 at 4:40 PM",
  lines: ["I’ll check the logs and see if there’s anything unusual."],
  tracking: "tracking-[0.001em]",
};
const ptUpdate: Message = {
  initials: "PT",
  color: "bg-[#563ed0]",
  name: "Peter Thomas",
  nameTracking: "tracking-[-0.015em]",
  time: "12:38 PM",
  mention: "@John B",
  lines: ["Can you keep us updated on what you find in the logs?"],
  tracking: "tracking-[0.0055em]",
};

function Chat() {
  return (
    <div className="relative h-[897px] shrink-0 overflow-hidden">
      <div className="-mt-[30px]">
        <p className="h-[39px] whitespace-nowrap pl-[120px] text-[25px] leading-[39px] text-[#202020]">
          Hey team, I’ve added the latest test results here. Let me know if anything about my code needs reworking.
        </p>
        <div className="ml-[118px] mt-[16px] flex items-center gap-[13px]">
          <div className="flex h-[49px] w-[80px] items-center rounded-full border-2 border-[#5f48dd] bg-[#eeeffd] pl-[10px] text-[22px] font-semibold text-[#5b43d6]">
            <span className="w-[38px] font-['Noto_Color_Emoji'] text-[25px] font-normal leading-none">👍</span>
            <span className="pt-px">2</span>
          </div>
          <div className="flex size-[45px] items-center justify-center rounded-full bg-[#efefef] text-[#5a5a5a]"><EmojiPlus /></div>
        </div>

        <div className="mt-[37px] flex flex-col">
          <MessageBlock m={jbGreat} />
          <div className="h-[25px]" />
          <MessageBlock m={ptSetup}>
            <div className="ml-[3px] mt-[22px] flex h-[37px] items-center">
              <span className="flex size-[37px] items-center justify-center rounded-full bg-[#05b39a] text-[21px] font-bold text-white">G</span>
              <span className="ml-[14px] pt-[2px] text-[21.500px] font-semibold tracking-[-0.02em] text-[#646464]">1 reply</span>
              <span className="ml-[15px] pt-[2px] text-[22px] text-[#8c8c8c]">2 days ago</span>
            </div>
            <span className="absolute left-[73px] top-[79px] h-[83px] w-[27px] rounded-bl-[26px] border-b-2 border-l-2 border-[#ebebeb]" />
          </MessageBlock>
          <div className="h-[38px]" />
          <MessageBlock m={greyConcern} />
          <div className="h-[25px]" />
          <MessageBlock m={jbLogs} />
          <div className="relative mb-[41px] mt-[43px] flex h-[61px] items-center pr-[17px]">
            <span className="h-[2px] w-[780px] bg-[#e4e4e4]" />
            <div className="flex h-[61px] w-[145px] items-center rounded-full border border-[#e4e4e4] pl-[21px] text-[#646464]">
              <span className="w-[84px] pt-[2px] text-[25px] font-semibold">Today</span>
              <Chevron w={18} h={10} sw={1.900} />
            </div>
            <span className="h-[2px] flex-1 bg-[#e4e4e4]" />
          </div>
          <MessageBlock m={ptUpdate} />
        </div>
      </div>

      <div className="absolute left-[1638px] top-[20px] flex h-[231px] w-[63px] flex-col items-center rounded-[18px] border border-[#e8e8e8] bg-white pr-[2px] text-[#868686]">
        <span className="mt-[2px] flex h-[56px] items-center"><SearchIcon /></span>
        <span className="flex h-[56px] items-center"><ReplyIcon /></span>
        <span className="flex h-[57px] items-center"><FollowUpIcon /></span>
        <span className="flex h-[56px] items-center"><SwapIcon /></span>
      </div>
      <span className="absolute left-[1707px] top-[6px] border-x-[6.500px] border-b-[7px] border-x-transparent border-b-[#bababa]" />
      <span className="absolute left-[1708px] top-[501px] h-[387px] w-[11px] rounded-full bg-[#bababa]" />
    </div>
  );
}

/* ---------- composer ---------- */

const Cell = ({ children }: { children: ReactNode }) => <span className="flex w-[56.300px] shrink-0 items-center justify-center">{children}</span>;

function Composer() {
  return (
    <div className="ml-[45px] flex h-[158px] w-[1633px] shrink-0 flex-col rounded-[18px] border border-[#e4e4e4]">
      <div className="mt-[24.500px] pl-[41.500px] text-[25px] leading-[39px] tracking-[-0.0025em] text-[#8c8c8c]">
        Write to Product Development, press 'space' for Brain, or '/' for commands
      </div>
      <div className="mt-[22.500px] flex h-[53px] items-center pl-[15px] pr-[19px] text-[#868686]">
        <span className="flex size-[53px] shrink-0 items-center justify-center rounded-full bg-[#efefef] text-[#5a5a5a]"><Plus /></span>
        <span className="ml-[14px] h-[30px] w-[2px] bg-[#e8e8e8]" />
        <span className="ml-[15px] mr-[1.500px] flex h-[45px] w-[148px] items-center rounded-[10px] bg-[#efefef] pl-[15px] text-[#5a5a5a]">
          <span className="w-[103px] pt-[2px] text-[22px] font-semibold tracking-[-0.01em]">Message</span>
          <Chevron w={18} h={10} sw={1.800} />
        </span>
        <Cell><BrainFlower size={28} /></Cell>
        <Cell><ClipIcon /></Cell>
        <Cell><AtIcon /></Cell>
        <Cell><FollowUpIcon /></Cell>
        <Cell><EmojiPlus /></Cell>
        <span className="ml-[6px] mr-[1.500px] h-[30px] w-[2px] bg-[#e8e8e8]" />
        <Cell><VideoIcon /></Cell>
        <Cell><MicIcon /></Cell>
        <span className="mx-[1.500px] h-[30px] w-[2px] bg-[#e8e8e8]" />
        <Cell><TaskPlus /></Cell>
        <Cell><DocPlus /></Cell>
        <Cell><BoardPlus /></Cell>
        <span className="ml-auto flex size-[52px] items-center justify-center rounded-[12px] bg-[#6447e6]">
          <svg width="26" height="26" viewBox="0 0 26 26" fill="#fff">
            <path d="M1 3.500C.7 1.300 2 .3 4 1l17.500 8.500c5 2.400 5 4.600 0 7L4 25c-2 .7-3.300-.3-3-2.500L2.200 14.200H15v-2.400H2.200z" />
          </svg>
        </span>
      </div>
    </div>
  );
}

/* ---------- page ---------- */

export default function App() {
  return (
    <div className="flex h-[1350px] w-[2400px] flex-col overflow-hidden bg-[#efefef] font-['Open_Sans','Noto_Sans',sans-serif]">
      <TopBar />
      <div className="flex items-start">
        <Rail />
        <div className="ml-[16px] mt-[1px] flex h-[1250px] w-[2248px] overflow-hidden rounded-[14px] bg-white shadow-[0_1px_4px_rgba(0,0,0,0.12)]">
          <Sidebar />
          <main className="relative flex w-[1724px] flex-col border-l border-[#e6e6e6] bg-white">
            <ChannelHeader />
            <Chat />
            <Composer />
            <span className="absolute left-[1707px] top-[1047px] border-x-[6.500px] border-t-[7px] border-x-transparent border-t-[#bababa]" />
          </main>
        </div>
      </div>
    </div>
  );
}
